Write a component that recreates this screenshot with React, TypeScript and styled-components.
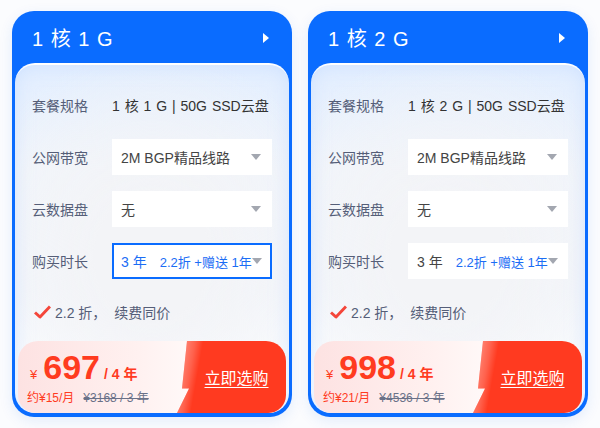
import React from "react"
import styled, { createGlobalStyle } from "styled-components"

const GlobalStyle = createGlobalStyle`
	body {
		margin: 0;
		background: #fbfcfe;
		font-family: "Liberation Sans", "Noto Sans CJK SC", sans-serif;
	}
`

const Page = styled.div`
	display: flex;
	gap: 16px;
	padding: 11px 12px;
`

const Card = styled.div`
	width: 280px;
	height: 406px;
	box-sizing: border-box;
	background: #0a6cff;
	border-radius: 22px;
	padding: 0 3px 4px;
	display: flex;
	flex-direction: column;
	box-shadow: 0 4px 14px rgba(20, 100, 230, 0.1);
`

const Header = styled.div`
	height: 52px;
	flex: none;
	display: flex;
	align-items: center;
	justify-content: space-between;
	padding: 0 20px 0 17px;
	color: #fff;
`

const Title = styled.div`
	font-size: 20px;
	letter-spacing: 0.5px;
	word-spacing: 1px;
	line-height: 1;
	margin-top: 4px;
`

const Arrow = styled.div`
	width: 0;
	height: 0;
	border-top: 5px solid transparent;
	border-bottom: 5px solid transparent;
	border-left: 6px solid #fff;
	margin-top: 2px;
`

const Panel = styled.div`
	flex: 1;
	border-radius: 20px;
	border-top: 2px solid rgba(255, 255, 255, 0.85);
	background:
		radial-gradient(ellipse 70% 60% at 50% 55%, #f3f4f7 30%, rgba(243, 244, 247, 0) 100%),
		linear-gradient(180deg, #e2eeff 0%, #f1f5fb 30%, #f3f6fb 65%, #fbfdff 85%, #fff 100%);
	display: flex;
	flex-direction: column;
	padding-top: 22px;
	overflow: hidden;
	box-shadow: inset 0 0 18px rgba(190, 215, 255, 0.55);
`

const Rows = styled.div`
	display: flex;
	flex-direction: column;
	gap: 16px;
	padding: 0 17px;
`

const Row = styled.div`
	display: flex;
	align-items: center;
	height: 36px;
`

const Label = styled.div`
	width: 80px;
	flex: none;
	font-size: 14px;
	color: #555e78;
`

const Value = styled.div`
	font-size: 14px;
	color: #333;
	word-spacing: 1px;
`

const Select = styled.div<{ $active?: boolean }>`
	width: 160px;
	height: 36px;
	box-sizing: border-box;
	background: #fff;
	border: 2px solid ${(p) => (p.$active ? "#0a6cff" : "#fff")};
	display: flex;
	align-items: center;
	justify-content: space-between;
	padding: 0 9px 0 7px;
	font-size: 14px;
	white-space: nowrap;
	color: ${(p) => (p.$active ? "#1b6df5" : "#444")};
`

const Caret = styled.span`
	width: 0;
	height: 0;
	border-left: 5px solid transparent;
	border-right: 5px solid transparent;
	border-top: 6px solid #a3a7b0;
	flex: none;
`

const Duration = styled.span`
	white-space: nowrap;
`

const Discount = styled.span`
	font-size: 13px;
	margin-left: 13px;
	color: #1b6df5;
`

const Note = styled.div`
	display: flex;
	align-items: center;
	gap: 4px;
	padding: 22px 17px 0 19px;
	height: 22px;
	font-size: 14px;
	color: #555e78;
`

const PriceBar = styled.div`
	margin: auto 3px 0;
	height: 72px;
	display: flex;
	border-radius: 20px 20px 18px 18px;
	background: linear-gradient(90deg, #fde2e2 0%, #fff1f0 45%, #fff 80%);
`

const PriceInfo = styled.div`
	flex: 1;
	padding: 8px 0 0 12px;
	display: flex;
	flex-direction: column;
`

const PriceLine = styled.div`
	display: flex;
	align-items: baseline;
	color: #ff3b1f;
	height: 36px;
`

const Yen = styled.span`
	font-size: 13px;
	margin-right: 6px;
`

const Amount = styled.span`
	font-size: 34px;
	font-weight: bold;
	line-height: 36px;
	margin-right: 4px;
`

const Unit = styled.span`
	font-size: 14px;
	font-weight: bold;
`

const SubLine = styled.div`
	display: flex;
	gap: 9px;
	font-size: 12px;
	margin-top: 3px;
	margin-left: -3px;
`

const Monthly = styled.span`
	color: #ff3b1f;
`

const Original = styled.span`
	color: #6a7188;
	text-decoration: line-through;
`

const BuyButton = styled.div`
	width: 111px;
	flex: none;
	position: relative;
	background: #ff3a20;
	border-radius: 0 20px 18px 0;
	clip-path: polygon(12px 0, 100% 0, 100% 100%, 2px 100%, 14px 66%, 7px 66%);
	display: flex;
	align-items: center;
	justify-content: center;
	padding-left: 12px;
	box-sizing: border-box;
	color: #fff;
	font-size: 16px;
	text-decoration: underline;
	text-underline-offset: 3px;
	text-decoration-thickness: 1px;

	&::before {
		content: "";
		position: absolute;
		inset: 0;
		background: linear-gradient(100deg, rgba(255, 255, 255, 0.55) 0px, rgba(255, 255, 255, 0.2) 20px, rgba(255, 255, 255, 0) 28px);
	}
`

const Check = () => (
	<svg width="17" height="14" viewBox="0 0 17 14">
		<path d="M1 7.5 L6 12 L16 1.5" fill="none" stroke="#f4463a" strokeWidth="3" strokeLinejoin="round" />
	</svg>
)

type Plan = {
	title: string
	spec: string
	price: string
	monthly: string
	original: string
}

const plans: Plan[] = [
	{ title: "1 核 1 G", spec: "1 核 1 G | 50G SSD云盘", price: "697", monthly: "约¥15/月", original: "¥3168 / 3 年" },
	{ title: "1 核 2 G", spec: "1 核 2 G | 50G SSD云盘", price: "998", monthly: "约¥21/月", original: "¥4536 / 3 年" },
]

const PlanCard = ({ plan, active }: { plan: Plan; active?: boolean }) => (
	<Card>
		<Header>
			<Title>{plan.title}</Title>
			<Arrow />
		</Header>
		<Panel>
			<Rows>
				<Row>
					<Label>套餐规格</Label>
					<Value>{plan.spec}</Value>
				</Row>
				<Row>
					<Label>公网带宽</Label>
					<Select>
						<span>2M BGP精品线路</span>
						<Caret />
					</Select>
				</Row>
				<Row>
					<Label>云数据盘</Label>
					<Select>
						<span>无</span>
						<Caret />
					</Select>
				</Row>
				<Row>
					<Label>购买时长</Label>
					<Select $active={active}>
						<Duration>
							3 年<Discount>2.2折 +赠送 1年</Discount>
						</Duration>
						<Caret />
					</Select>
				</Row>
			</Rows>
			<Note>
				<Check />
				<span>2.2 折，&nbsp;&nbsp;续费同价</span>
			</Note>
			<PriceBar>
				<PriceInfo>
					<PriceLine>
						<Yen>¥</Yen>
						<Amount>{plan.price}</Amount>
						<Unit>/ 4 年</Unit>
					</PriceLine>
					<SubLine>
						<Monthly>{plan.monthly}</Monthly>
						<Original>{plan.original}</Original>
					</SubLine>
				</PriceInfo>
				<BuyButton>立即选购</BuyButton>
			</PriceBar>
		</Panel>
	</Card>
)

export default function App() {
	return (
		<>
			<GlobalStyle />
			<Page>
				<PlanCard plan={plans[0]} active />
				<PlanCard plan={plans[1]} />
			</Page>
		</>
	)
}
